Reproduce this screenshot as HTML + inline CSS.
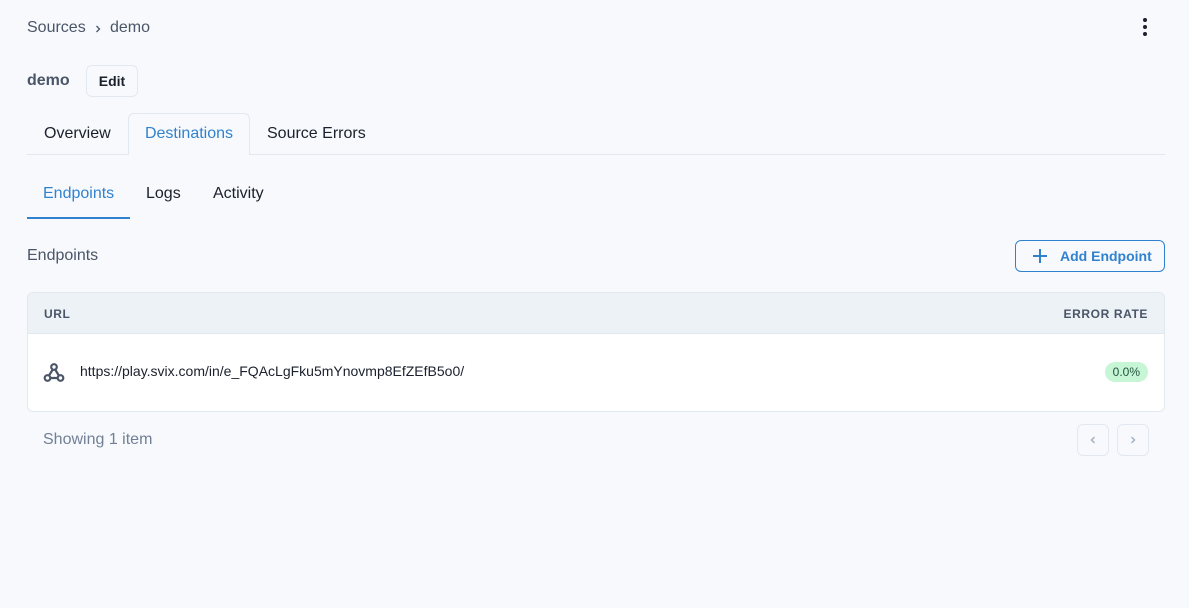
<!DOCTYPE html>
<html><head><style>
*{box-sizing:border-box;margin:0;padding:0}
body{width:1189px;height:608px;background:#f7f9fc;font-family:"Liberation Sans",sans-serif;position:relative;overflow:hidden;color:#1a202c}
.abs{position:absolute}
</style></head><body>
<div class="abs" style="left:27px;top:19px;font-size:16px;color:#4a5568">Sources</div>
<svg class="abs" style="left:93px;top:24px" width="10" height="10" viewBox="0 0 10 10"><path d="M3.5 2l3 3-3 3" stroke="#4a5568" stroke-width="1.3" fill="none"/></svg>
<div class="abs" style="left:110px;top:19px;font-size:16px;color:#4a5568">demo</div>
<div class="abs" style="left:1143px;top:18px;width:4px">
<div style="width:4px;height:4px;border-radius:2px;background:#1a202c;margin-bottom:3px"></div>
<div style="width:4px;height:4px;border-radius:2px;background:#1a202c;margin-bottom:3px"></div>
<div style="width:4px;height:4px;border-radius:2px;background:#1a202c"></div></div>
<div class="abs" style="left:27px;top:72px;font-size:16px;font-weight:bold;color:#4a5568">demo</div>
<div class="abs" style="left:86px;top:65px;width:52px;height:32px;border:1px solid #e2e8f0;border-radius:6px;background:#f7f9fc;font-size:14px;font-weight:bold;text-align:center;line-height:30px">Edit</div>
<div class="abs" style="left:27px;top:154px;width:1138px;height:1px;background:#e2e8f0"></div>
<div class="abs" style="left:44px;top:125px;font-size:16px">Overview</div>
<div class="abs" style="left:128px;top:113px;width:122px;height:42px;border:1px solid #e2e8f0;border-bottom:none;border-radius:6px 6px 0 0;background:#f7f9fc;font-size:16px;color:#3182ce;text-align:center;line-height:40px">Destinations</div>
<div class="abs" style="left:267px;top:125px;font-size:16px">Source Errors</div>
<div class="abs" style="left:43px;top:185px;font-size:16px;color:#3182ce">Endpoints</div>
<div class="abs" style="left:27px;top:217px;width:103px;height:2px;background:#3182ce"></div>
<div class="abs" style="left:146px;top:185px;font-size:16px">Logs</div>
<div class="abs" style="left:213px;top:185px;font-size:16px">Activity</div>
<div class="abs" style="left:27px;top:247px;font-size:16px;color:#4a5568">Endpoints</div>
<div class="abs" style="left:1015px;top:240px;width:150px;height:32px;border:1px solid #3182ce;border-radius:6px;color:#3182ce;font-size:14px;font-weight:bold;line-height:30px">
<svg class="abs" style="left:16px;top:7px" width="16" height="16" viewBox="0 0 16 16"><path d="M8 1v14M1 8h14" stroke="#3182ce" stroke-width="2"/></svg>
<span class="abs" style="left:44px;top:0">Add Endpoint</span></div>
<div class="abs" style="left:27px;top:292px;width:1138px;height:120px;border:1px solid #e2e8f0;border-radius:6px;background:#fff;overflow:hidden">
<div style="height:41px;background:#edf2f7;border-bottom:1px solid #e2e8f0;font-size:12px;font-weight:bold;letter-spacing:.6px;color:#4a5568;position:relative">
<span class="abs" style="left:16px;top:14px">URL</span><span class="abs" style="right:16px;top:14px">ERROR RATE</span></div>
<svg class="abs" style="left:15px;top:69px" width="22" height="22" viewBox="0 0 22 22" fill="none" stroke="#4a5568" stroke-width="2.2" stroke-linecap="round"><circle cx="11" cy="5" r="2.8"/><circle cx="4.5" cy="16" r="2.8"/><circle cx="17.5" cy="16" r="2.8"/><path d="M9.5 8L6 13.5M12.5 8l3 5M7.5 16h7"/></svg>
<span class="abs" style="left:52px;top:70px;font-size:14px">https://play.svix.com/in/e_FQAcLgFku5mYnovmp8EfZEfB5o0/</span>
<span class="abs" style="right:16px;top:69px;background:#c6f6d5;color:#22543d;font-size:12px;padding:3px 8px;border-radius:10px">0.0%</span>
</div>
<div class="abs" style="left:43px;top:431px;font-size:16px;color:#718096">Showing 1 item</div>
<div class="abs" style="left:1077px;top:424px;width:32px;height:32px;border:1px solid #e2e8f0;border-radius:6px"><svg class="abs" style="left:10px;top:10px" width="10" height="10" viewBox="0 0 10 10"><path d="M6.5 2l-3 3 3 3" stroke="#a0aec0" stroke-width="1.4" fill="none"/></svg></div>
<div class="abs" style="left:1117px;top:424px;width:32px;height:32px;border:1px solid #e2e8f0;border-radius:6px"><svg class="abs" style="left:10px;top:10px" width="10" height="10" viewBox="0 0 10 10"><path d="M3.5 2l3 3-3 3" stroke="#a0aec0" stroke-width="1.4" fill="none"/></svg></div>
</body></html>
